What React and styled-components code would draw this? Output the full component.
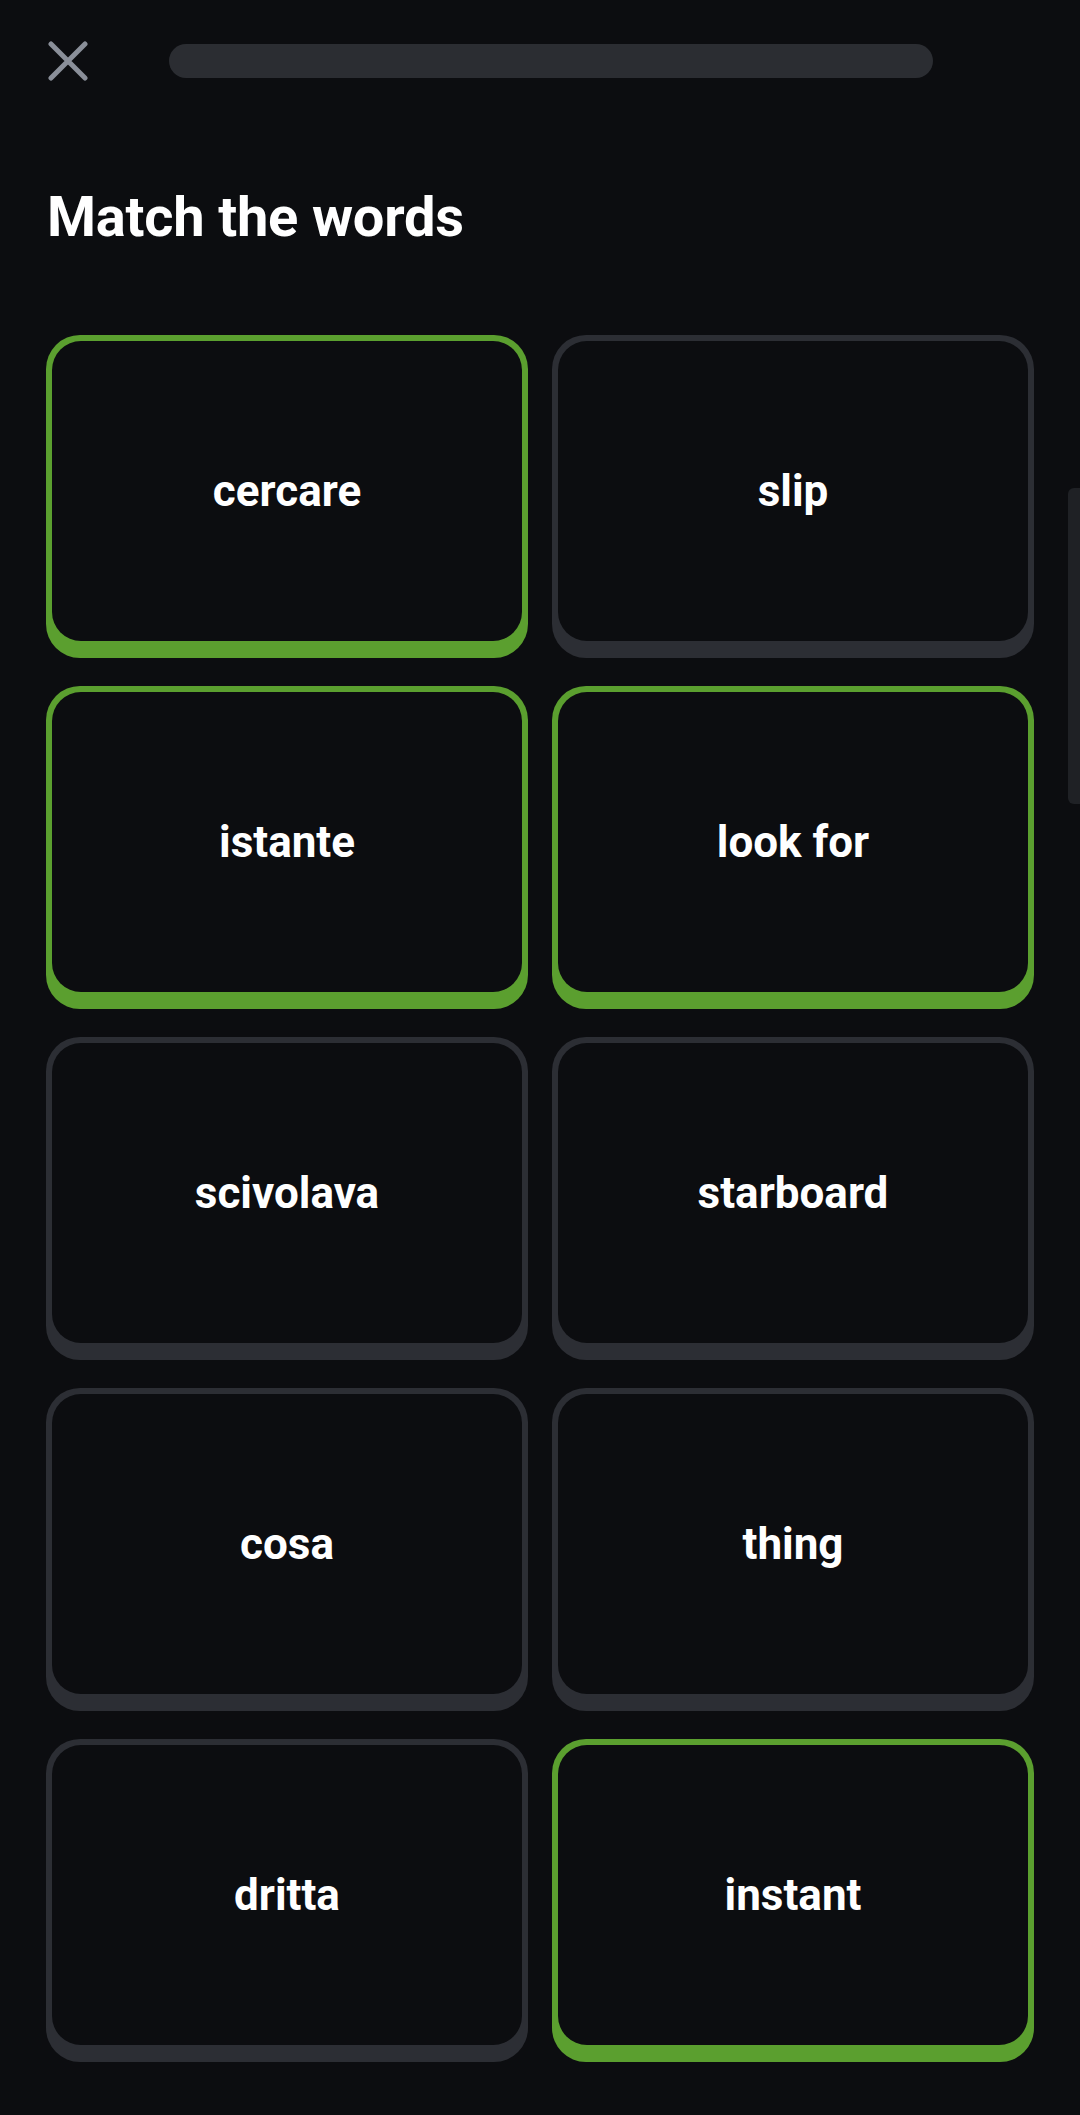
import React from 'react';
import styled, { createGlobalStyle } from 'styled-components';

const Global = createGlobalStyle`
  html, body {
    margin: 0;
    padding: 0;
    background: #0c0d10;
  }
  body {
    font-family: Roboto, "Liberation Sans", sans-serif;
    color: #ffffff;
  }
`;

const Page = styled.div`
  position: relative;
  min-height: 2115px;
  padding: 0 46px;
  box-sizing: border-box;
  background: #0c0d10;
`;

const Header = styled.div`
  display: flex;
  align-items: center;
  padding-top: 41px;
  height: 40px;
`;

const Close = styled.button`
  border: none;
  background: none;
  padding: 0;
  margin-left: 2px;
  width: 40px;
  height: 40px;
  display: flex;
  cursor: pointer;
`;

const Progress = styled.div`
  margin-left: 81px;
  width: 764px;
  height: 34px;
  border-radius: 17px;
  background: #2b2d32;
`;

const Title = styled.h1`
  margin: 108px 0 0 1px;
  font-size: 56px;
  line-height: 56px;
  font-weight: 700;
  letter-spacing: -0.2px;
`;

const Grid = styled.div`
  margin-top: 90px;
  display: grid;
  grid-template-columns: 1fr 1fr;
  grid-auto-rows: 323px;
  column-gap: 24px;
  row-gap: 28px;
`;

// outer shell is the coloured edge, the face sits on it with a thicker lip below
const Card = styled.button`
  box-sizing: border-box;
  border: none;
  border-radius: 34px;
  background: ${p => (p.$picked ? '#5b9f2f' : '#2c2e34')};
  padding: 6px 6px 17px;
  display: flex;
  cursor: pointer;
`;

const Face = styled.span`
  flex: 1;
  border-radius: 29px;
  background: #0c0d10;
  color: #ffffff;
  font-family: Roboto, "Liberation Sans", sans-serif;
  font-size: 44px;
  font-weight: 700;
  display: flex;
  align-items: center;
  justify-content: center;
`;

const Scroll = styled.div`
  position: absolute;
  right: 0;
  top: 488px;
  width: 12px;
  height: 316px;
  border-radius: 6px 0 0 6px;
  background: #1f2125;
`;

const words = [
  { text: 'cercare', picked: true },
  { text: 'slip', picked: false },
  { text: 'istante', picked: true },
  { text: 'look for', picked: true },
  { text: 'scivolava', picked: false },
  { text: 'starboard', picked: false },
  { text: 'cosa', picked: false },
  { text: 'thing', picked: false },
  { text: 'dritta', picked: false },
  { text: 'instant', picked: true },
];

export default function App() {
  return (
    <Page>
      <Global />
      <Header>
        <Close aria-label="close">
          <svg width="40" height="40" viewBox="0 0 40 40">
            <path d="M3 3 L37 37 M37 3 L3 37" stroke="#8a8f99" strokeWidth="5" strokeLinecap="round" />
          </svg>
        </Close>
        <Progress />
      </Header>
      <Title>Match the words</Title>
      <Grid>
        {words.map(w => (
          <Card key={w.text} $picked={w.picked}>
            <Face>{w.text}</Face>
          </Card>
        ))}
      </Grid>
      <Scroll />
    </Page>
  );
}
